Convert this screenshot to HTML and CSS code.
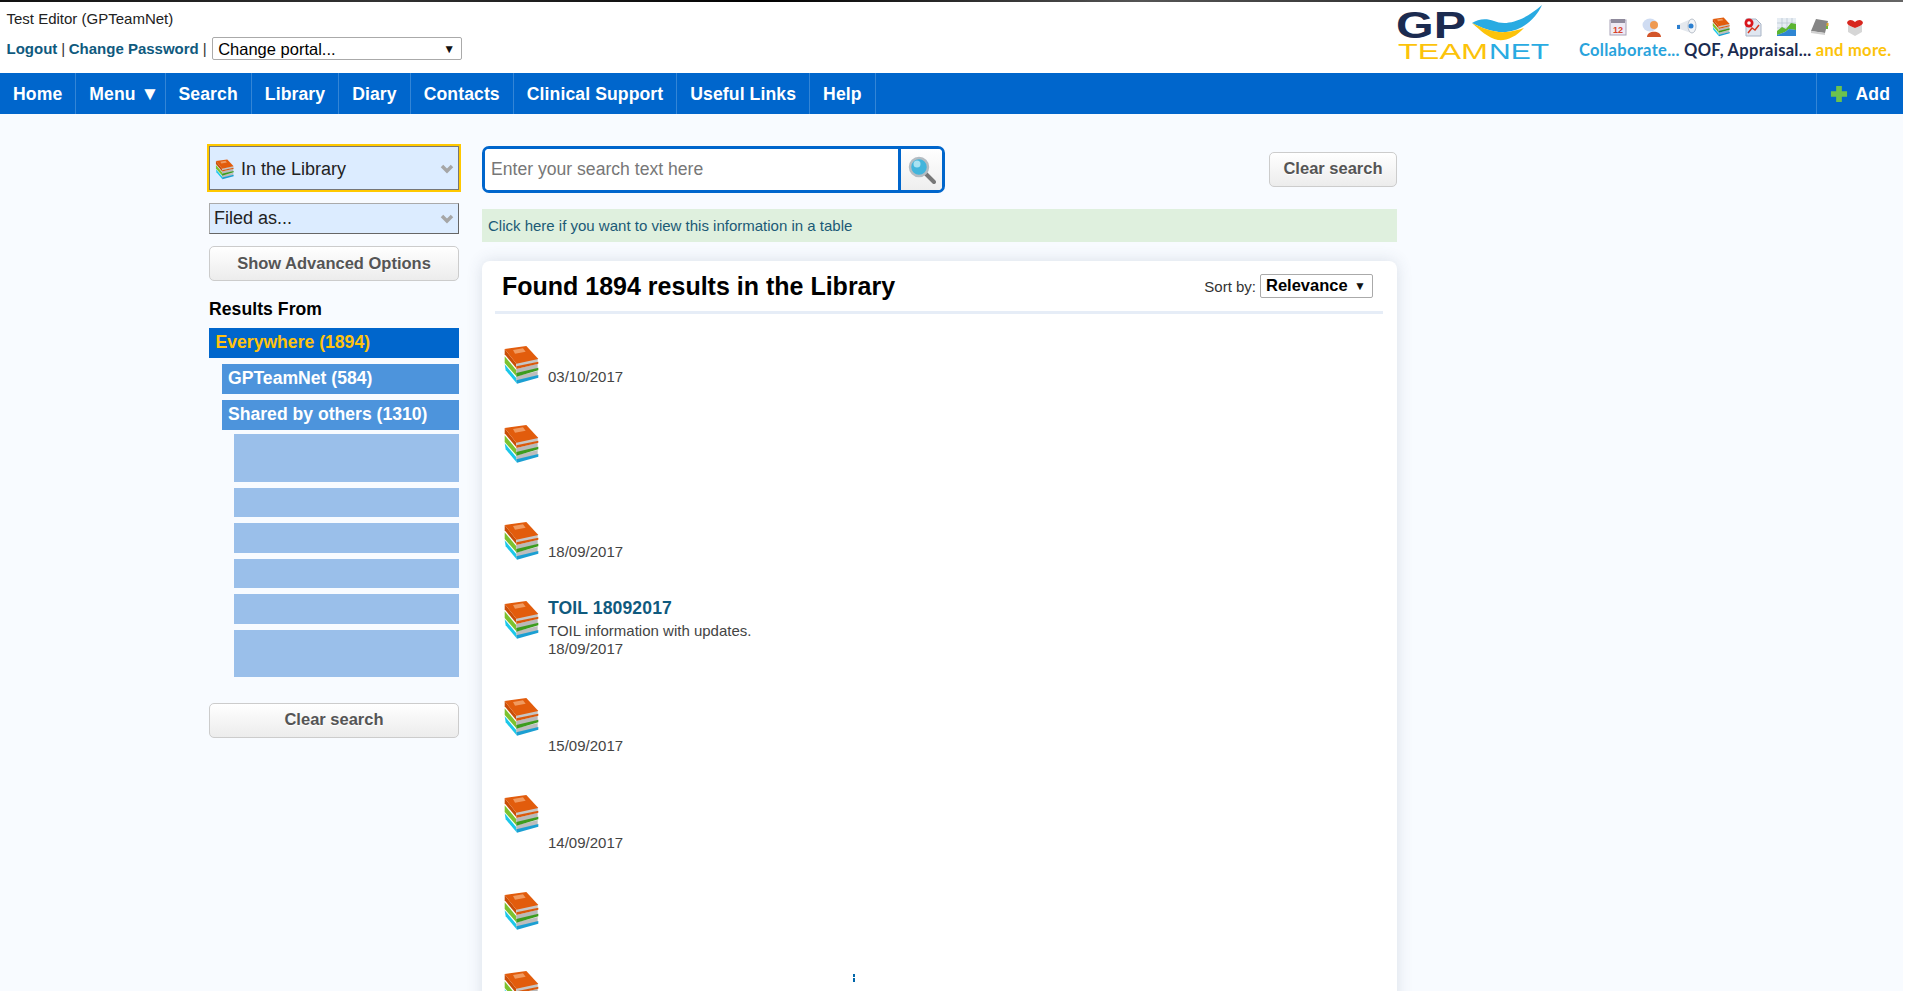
FILE: index.html
```html
<!DOCTYPE html>
<html lang="en">
<head>
<meta charset="utf-8">
<title>GPTeamNet Library search</title>
<link rel="stylesheet" href="styles.css">
</head>
<body>
<svg class="defs" width="0" height="0" aria-hidden="true">
  <symbol id="books" viewBox="0 0 108 120">
    <polygon points="5,58 40,100 42,116 8,76" fill="#1cc8ea"/>
    <polygon points="40,94 104,78 104,92 40,108" fill="#bdbdbd"/>
    <polygon points="40,106 106,90 106,98 42,116" fill="#1b9fd2"/>
    <polygon points="5,34 40,76 40,94 5,54" fill="#7cc22f"/>
    <polygon points="40,72 104,56 104,70 40,88" fill="#b9b9b9"/>
    <polygon points="40,84 106,68 106,76 40,95" fill="#3c9c1e"/>
    <polygon points="5,12 40,56 40,70 5,28" fill="#c94e08"/>
    <polygon points="40,54 104,40 104,52 40,66" fill="#c6c6c6"/>
    <polygon points="40,64 106,50 106,56 40,72" fill="#d9590c"/>
    <polygon points="5,12 70,3 106,42 40,56" fill="#e25c0c"/>
    <polygon points="30,15 60,10 68,20 36,26" fill="#f09a60"/>
  </symbol>
  <symbol id="chev" viewBox="0 0 14 10">
    <polyline points="2,2 7,7 12,2" fill="none" stroke="#a6a6a6" stroke-width="3.500"/>
  </symbol>
</svg>

<div class="page">
  <header class="topbar">
    <div class="account">
      <div class="user">Test Editor (GPTeamNet)</div>
      <div class="links">
        <a href="#">Logout</a><span class="sep">|</span><a href="#">Change Password</a><span class="sep">|</span>
        <div class="portal">
          <select class="plain-select portal-select"><option>Change portal...</option></select>
          <span class="arrow">▼</span>
        </div>
      </div>
    </div>
    <div class="brand">
      <svg class="logo" width="158" height="62" viewBox="0 0 158 62" role="img" aria-label="GP TeamNet">
        <text x="0" y="34" class="logo-gp" textLength="70" lengthAdjust="spacingAndGlyphs">GP</text>
        <path d="M76 19 C82 15 90 14 98 17 C108 21 124 20 146 1 C140 14 128 26 110 28 C98 29 86 24 76 19Z" fill="#29abe2"/>
        <path d="M76 19 C86 24 98 29 110 28 C116 27.500 122 26 128 24 C120 33 110 37 102 36 C92 34 84 26 76 19Z" fill="#fcc30a"/>
        <text x="2" y="55" class="logo-team" textLength="90" lengthAdjust="spacingAndGlyphs">TEAM</text>
        <text x="93" y="55" class="logo-net" textLength="60" lengthAdjust="spacingAndGlyphs">NET</text>
      </svg>
      <div class="promo">
        <div class="promo-icons">
          <svg width="18" height="18" viewBox="0 0 18 18"><rect x="1" y="2" width="16" height="15" fill="#eeeaf4" stroke="#a9a3b8"/><rect x="2" y="1" width="14" height="4" fill="#8f8a9c"/><text x="9" y="14.500" class="cal-num">12</text></svg>
          <svg width="20" height="19" viewBox="0 0 20 19"><ellipse cx="8" cy="7" rx="7.500" ry="6.500" fill="#cfdcf2"/><circle cx="12" cy="7" r="4" fill="#ef9a52"/><path d="M5 19 C5 12 19 12 19 19Z" fill="#d3552a"/></svg>
          <svg width="21" height="18" viewBox="0 0 21 18"><polygon points="1,7 15,1 15,15 1,10" fill="#e4e8ee"/><ellipse cx="16" cy="8" rx="4" ry="7" fill="#f3f5f8" stroke="#b9c0ca"/><circle cx="15" cy="8" r="2.500" fill="#2b7fd0"/><rect x="1" y="7" width="3" height="4" fill="#2b7fd0"/></svg>
          <svg width="18" height="20" viewBox="0 0 108 120"><use href="#books"/></svg>
          <svg width="18" height="19" viewBox="0 0 18 19"><polygon points="2,1 12,1 17,6 17,18 2,18" fill="#dfe6f0" stroke="#a9b5c6"/><circle cx="5" cy="5" r="4.500" fill="#d9161d"/><circle cx="5" cy="5" r="1.800" fill="#fff"/><polyline points="4,15 8,10 11,12 15,7" fill="none" stroke="#d9361d" stroke-width="1.500"/></svg>
          <svg width="19" height="18" viewBox="0 0 19 18"><rect width="19" height="18" fill="#e6edf3"/><path d="M0 5H19M0 10H19M5 0V18M10 0V18M15 0V18" stroke="#b4c2ce" stroke-width=".7"/><polygon points="0,13 5,9 9,11 14,5 19,6 19,12 12,11 8,14 0,17" fill="#5bb531"/><polygon points="0,17 8,14 12,11 19,12 19,18 0,18" fill="#2f86d3"/></svg>
          <svg width="20" height="18" viewBox="0 0 20 18"><polygon points="6,1 18,3 15,15 1,13" fill="#858585"/><polygon points="1,13 15,15 15,17 1,15" fill="#d0d0d0"/><rect x="16.500" y="5" width="2" height="3" fill="#e0a52a"/><rect x="16" y="8" width="2" height="3" fill="#6fb53a"/></svg>
          <svg width="20" height="18" viewBox="0 0 20 18"><polygon points="3,7 10,10 17,7 17,14 10,18 3,14" fill="#d6d6d6"/><path d="M10 10 C5 8 0 6 3 3 C5 1 8 2 10 4 C12 2 15 1 17 3 C20 6 15 8 10 10Z" fill="#d7261e"/></svg>
        </div>
        <div class="tagline"><span class="tag-blue">Collaborate...</span> <span class="tag-navy">QOF, Appraisal...</span> <span class="tag-yellow">and more.</span></div>
      </div>
    </div>
  </header>

  <nav class="mainnav">
    <a class="nav-item" href="#">Home</a>
    <a class="nav-item nav-menu" href="#">Menu <span class="nav-caret">▼</span></a>
    <a class="nav-item" href="#">Search</a>
    <a class="nav-item" href="#">Library</a>
    <a class="nav-item" href="#">Diary</a>
    <a class="nav-item" href="#">Contacts</a>
    <a class="nav-item" href="#">Clinical Support</a>
    <a class="nav-item" href="#">Useful Links</a>
    <a class="nav-item" href="#">Help</a>
    <a class="nav-item nav-add" href="#">
      <svg width="18" height="18" viewBox="0 0 19 19"><path d="M6.500 1H12.500V6.500H18V12.500H12.500V18H6.500V12.500H1V6.500H6.500Z" fill="#6cc24d"/></svg>Add</a>
  </nav>

  <div class="content">
    <aside class="sidebar">
      <div class="fake-select select-scope">
        <svg width="19" height="21" viewBox="0 0 108 120"><use href="#books"/></svg>
        <span class="select-label">In the Library</span>
        <svg class="chev" width="14" height="10"><use href="#chev"/></svg>
      </div>
      <div class="fake-select select-filed">
        <span class="select-label">Filed as...</span>
        <svg class="chev" width="14" height="10"><use href="#chev"/></svg>
      </div>
      <button class="btn btn-wide btn-advanced">Show Advanced Options</button>
      <h3 class="side-title">Results From</h3>
      <ul class="facets">
        <li class="facet facet-top">Everywhere (1894)</li>
        <li class="facet facet-mid">GPTeamNet (584)</li>
        <li class="facet facet-mid">Shared by others (1310)</li>
      </ul>
      <ul class="subfacets">
        <li class="sub sub-double"></li>
        <li class="sub"></li>
        <li class="sub"></li>
        <li class="sub"></li>
        <li class="sub"></li>
        <li class="sub sub-double"></li>
      </ul>
      <button class="btn btn-wide btn-clear-side">Clear search</button>
    </aside>

    <main class="results">
      <div class="search-row">
        <div class="searchbox">
          <input class="search-input" type="text" placeholder="Enter your search text here">
          <div class="search-go">
            <svg width="28" height="28" viewBox="0 0 28 28"><line x1="17" y1="17" x2="26" y2="26" stroke="#777" stroke-width="4" stroke-linecap="round"/><circle cx="11" cy="11" r="9" fill="#42b5dc" stroke="#b4bcc2" stroke-width="2.500"/><circle cx="9" cy="8" r="3.500" fill="#a8e2f2"/></svg>
          </div>
        </div>
        <button class="btn btn-clear-top">Clear search</button>
      </div>
      <div class="table-hint"><a href="#">Click here if you want to view this information in a table</a></div>
      <section class="card">
        <div class="card-head">
          <h2 class="card-title">Found 1894 results in the Library</h2>
          <div class="sort">
            <span>Sort by:</span>
            <div class="sort-box">
              <select class="plain-select sort-select"><option>Relevance</option></select>
              <span class="arrow">▼</span>
            </div>
          </div>
        </div>
        <div class="result-list">
          <article class="result">
            <svg class="book" width="36" height="40"><use href="#books"/></svg>
            <div class="result-body"><div class="r-title"></div><div class="r-line">03/10/2017</div></div>
          </article>
          <article class="result">
            <svg class="book" width="36" height="40"><use href="#books"/></svg>
            <div class="result-body"><div class="r-title"></div><div class="r-line"></div><div class="r-line"></div></div>
          </article>
          <article class="result">
            <svg class="book" width="36" height="40"><use href="#books"/></svg>
            <div class="result-body"><div class="r-title"></div><div class="r-line">18/09/2017</div></div>
          </article>
          <article class="result">
            <svg class="book" width="36" height="40"><use href="#books"/></svg>
            <div class="result-body"><div class="r-title"><a href="#">TOIL 18092017</a></div><div class="r-line">TOIL information with updates.</div><div class="r-line">18/09/2017</div></div>
          </article>
          <article class="result">
            <svg class="book" width="36" height="40"><use href="#books"/></svg>
            <div class="result-body"><div class="r-title"></div><div class="r-line"></div><div class="r-line">15/09/2017</div></div>
          </article>
          <article class="result">
            <svg class="book" width="36" height="40"><use href="#books"/></svg>
            <div class="result-body"><div class="r-title"></div><div class="r-line"></div><div class="r-line">14/09/2017</div></div>
          </article>
          <article class="result">
            <svg class="book" width="36" height="40"><use href="#books"/></svg>
            <div class="result-body"><div class="r-title"></div><div class="r-line"></div></div>
          </article>
          <article class="result">
            <svg class="book" width="36" height="40"><use href="#books"/></svg>
            <div class="result-body"><div class="r-title"><span class="r-fragment"></span></div></div>
          </article>
        </div>
      </section>
    </main>
  </div>
</div>
</body>
</html>
```

FILE: styles.css
```css
* { box-sizing: border-box; }
html, body { margin: 0; height: 100%; overflow: hidden; background: #fff; }
body { font-family: "Liberation Sans", Arial, sans-serif; color: #444; }
.defs { position: absolute; }
a { color: inherit; text-decoration: none; }
ul { list-style: none; margin: 0; padding: 0; }

.page { width: 1903px; height: 991px; overflow: hidden; background: #f8fbff; }

/* header */
.topbar {
  height: 73px; display: flex; justify-content: space-between; background: #fff;
  border-top: 2px solid transparent;
  border-image: linear-gradient(90deg, #111, #333 20%, #000 40%, #555 60%, #222 80%, #666) 1;
  color: #222;
}
.account { padding: 8px 0 0 6.500px; font-size: 15px; }
.user { height: 17px; line-height: 17px; }
.links { display: flex; align-items: center; margin-top: 10px; color: #0f5a7e; }
.links a { font-weight: 700; }
.sep { margin: 0 3.500px 0 4px; color: #333; font-weight: 400; }
.portal { position: relative; margin-left: 2px; }
.plain-select {
  appearance: none; -webkit-appearance: none; display: block; background: #fff;
  border: 1px solid #aaa; border-radius: 2px; color: #000;
  font-family: "Liberation Sans", Arial, sans-serif; font-size: 16.5px;
}
.portal-select { width: 250px; height: 23px; padding: 0 5px; }
.arrow {
  position: absolute; right: 7px; top: 50%; transform: translateY(-50%);
  font-size: 12px; line-height: 12px; color: #111; pointer-events: none;
}

.brand { display: flex; padding-right: 10px; }
.logo { display: block; margin: 2px 25px 0 0; }
.logo-gp { font: 700 37px "Liberation Sans", Arial, sans-serif; fill: #1b2b50; }
.logo-team { font: 400 22.300px "Liberation Sans", Arial, sans-serif; fill: #fcc30a; }
.logo-net { font: 400 22.300px "Liberation Sans", Arial, sans-serif; fill: #29abe2; }
.promo { width: 314px; display: flex; flex-direction: column; align-items: flex-start; }
.promo-icons { display: flex; align-items: center; gap: 14.500px; height: 18px; margin: 16px 0 0 30px; }
.cal-num { font: 700 9px "Liberation Sans", Arial, sans-serif; fill: #d8432b; text-anchor: middle; }
.tagline { margin-top: 4px; white-space: nowrap; font: 700 16.500px/20px Lato, "Open Sans", sans-serif; letter-spacing: .3px; }
.tag-blue { color: #29a3dc; }
.tag-navy { color: #1b2b50; }
.tag-yellow { color: #fcc30a; }

/* nav */
.mainnav { height: 41px; display: flex; background: #0066cc; }
.nav-item {
  padding: 1px 13px 0; line-height: 40px; color: #fff; font-size: 17.6px; font-weight: 700;
  letter-spacing: .1px; border-right: 1px solid #3385d6; white-space: nowrap;
}
.nav-caret { font-size: 19px; line-height: 1; margin-right: -8px; }
.nav-add { margin-left: auto; border-right: 0; border-left: 1px solid #3385d6; display: flex; align-items: center; gap: 8px; }

/* layout */
.content { display: flex; gap: 23px; padding: 32px 0 0 209px; }
.sidebar { width: 250px; flex: none; }
.results { width: 915px; flex: none; }

/* sidebar */
.fake-select {
  display: flex; align-items: center; width: 250px; background: #dcecff;
  border: 1px solid #aaa; border-right-color: #666; border-bottom-color: #666; color: #222; font-size: 18px;
}
.select-label { flex: 1; }
.select-scope { height: 44px; padding: 2px 4px 0 5px; gap: 7px; outline: 2px solid #ffc800; border-color: #777; }
.select-filed { height: 31px; margin-top: 13px; padding: 0 4px 0 4px; }
.btn {
  display: block; height: 35px; background: linear-gradient(#fff, #ececec);
  border: 1px solid #ccc; border-radius: 5px; color: #555; font-family: "Liberation Sans", Arial, sans-serif;
  font-size: 16.5px; font-weight: 700; text-shadow: 0 1px 0 #fff; padding: 0 0 2px;
}
.btn-wide { width: 250px; }
.btn-advanced { margin-top: 12px; padding-bottom: 1px; }
.side-title { margin: 17px 0 8px; font-size: 17.6px; line-height: 22px; letter-spacing: .05px; color: #000; }
.facets { display: flex; flex-direction: column; gap: 6.500px; }
.facet { height: 29.500px; line-height: 28px; padding-left: 6.500px; font-size: 17.6px; font-weight: 700; color: #fff; }
.facet-top { background: #0066cc; color: #ffc20e; }
.facet-mid { background: #4d94dc; margin-left: 13px; padding-left: 6px; }
.subfacets { display: flex; flex-direction: column; gap: 6px; margin: 4.500px 0 0 25px; }
.sub { height: 29.500px; background: #9abfea; }
.sub-double { height: 47.500px; }
.btn-clear-side { margin-top: 26px; }

/* search */
.search-row { display: flex; justify-content: space-between; align-items: flex-start; }
.searchbox {
  width: 463px; height: 47px; display: flex; background: #fff;
  border: 3px solid #0066cc; border-radius: 7px; overflow: hidden;
}
.search-input {
  flex: 1; min-width: 0; border: 0; padding: 0 6px; background: #fff; outline: 0;
  font-family: "Liberation Sans", Arial, sans-serif; font-size: 17.6px; color: #444;
}
.search-input::placeholder { color: #777; opacity: 1; }
.search-go {
  width: 44px; flex: none; display: flex; align-items: center; justify-content: center;
  border-left: 3px solid #0066cc; background: linear-gradient(#fff, #eee);
}
.btn-clear-top { width: 128px; margin-top: 6px; }
.table-hint {
  height: 33px; margin-top: 16px; padding-left: 6px; line-height: 34px; background: #dff0de;
  color: #1b5a76; font-size: 15px;
}

/* card */
.card {
  margin-top: 19px; min-height: 800px; padding: 0 14px 0 13px; background: #fff;
  border-radius: 8px; box-shadow: 0 0 16px rgba(60, 80, 110, .16);
}
.card-head {
  height: 53px; display: flex; justify-content: space-between; align-items: flex-start;
  border-bottom: 3px solid #e6edf7; padding: 0 10px 0 7px;
}
.card-title { margin: 9px 0 0; font-size: 25px; line-height: 32px; color: #000; }
.sort { display: flex; align-items: center; gap: 4px; margin-top: 13px; font-size: 15px; color: #333; }
.sort-box { position: relative; }
.sort-select { width: 113px; height: 24px; padding: 0 5px 2px; font-weight: 700; }
.result-list { padding-top: 27px; }
.result { display: flex; gap: 9px; padding: 0 0 35px 8px; }
.result:first-child .r-line { padding-top: 1px; }
.book { flex: none; margin-top: 4px; }
.result-body { padding-top: 2px; flex: 1; }
.r-title { height: 24px; line-height: 20px; font-size: 17.6px; letter-spacing: .1px; font-weight: 700; color: #0f5a7e; }
.r-line { height: 18px; line-height: 18px; font-size: 15px; color: #444; }
.r-fragment { display: inline-block; width: 2px; height: 8px; margin-left: 305px; background: linear-gradient(#0066aa 35%, transparent 35% 55%, #0066aa 55%); vertical-align: 2px; }
```
